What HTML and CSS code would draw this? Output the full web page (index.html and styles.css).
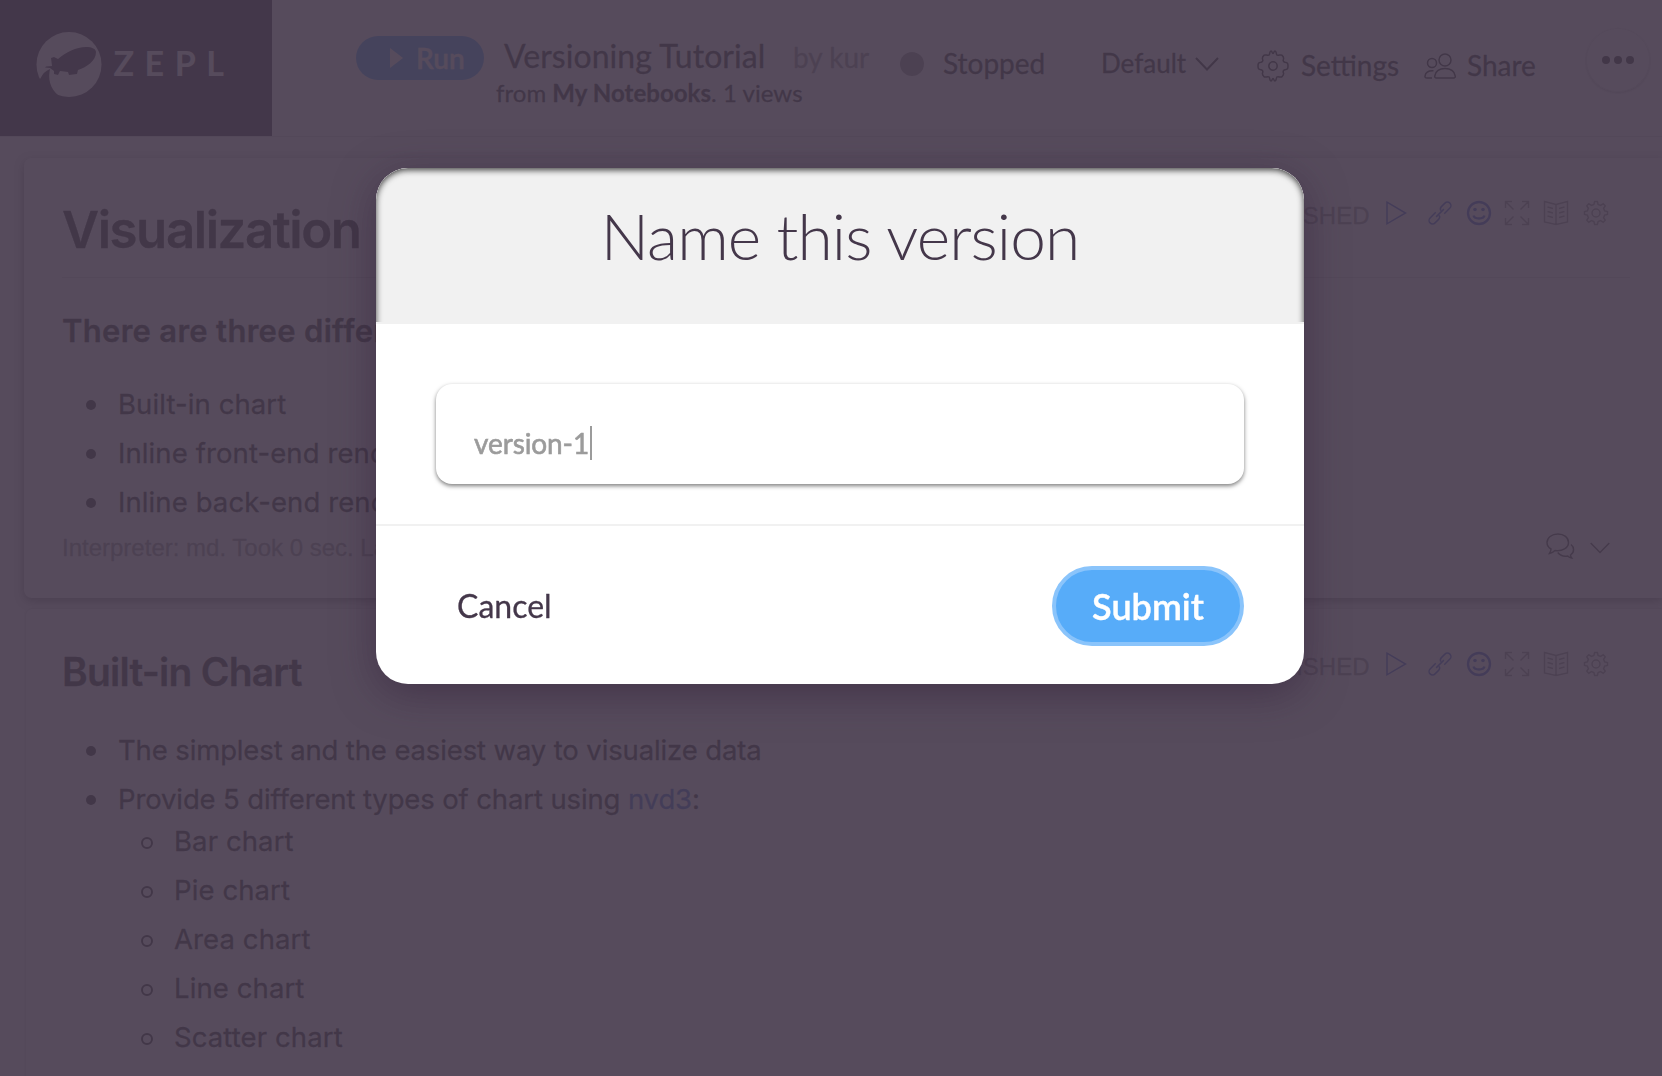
FILE: index.html
```html
<!DOCTYPE html>
<html lang="en">
<head>
<meta charset="utf-8">
<title>Versioning Tutorial</title>
<link rel="stylesheet" href="styles.css">
</head>
<body>
<svg class="sprite" width="0" height="0" aria-hidden="true">
  <symbol id="play" viewBox="0 0 24 26"><path d="M3 2.2 21.5 13 3 23.8Z"/></symbol>
  <symbol id="link" viewBox="0 0 26 26"><g transform="rotate(-45 13 13)"><path d="M10.5 9.5H2.5a3.5 3.5 0 0 0-3.5 3.500a3.500 3.500 0 0 0 3.500 3.500h5a3.500 3.500 0 0 0 3.300-2.400M15.500 16.500h8a3.500 3.500 0 0 0 3.500-3.500a3.500 3.500 0 0 0-3.500-3.500h-5a3.500 3.500 0 0 0-3.300 2.400M7.500 13h11"/></g></symbol>
  <symbol id="smile" viewBox="0 0 26 26"><circle cx="13" cy="13" r="11"/><path d="M7.500 15.500c1.200 4 9.800 4 11 0"/><circle class="dot" cx="9" cy="9.500" r="1.800"/><circle class="dot" cx="17" cy="9.500" r="1.800"/></symbol>
  <symbol id="expand" viewBox="0 0 26 26"><path d="M1.500 8V1.500H8M18 1.500h6.500V8M24.500 18v6.500H18M8 24.500H1.500V18M1.500 1.500l8 8M24.500 1.500l-8 8M24.500 24.500l-8-8M1.500 24.500l8-8"/></symbol>
  <symbol id="book" viewBox="0 0 26 26"><path d="M13 4.500 1.500 1.500v20.500L13 24.500l11.500-2.500V1.500ZM13 4.500v20M4.500 7l5.500 1.500M4.500 11.500l5.500 1.500M4.500 16l5.500 1.500M21.500 7 16 8.500M21.500 11.500 16 13M21.500 16 16 17.500"/></symbol>
  <symbol id="gear" viewBox="0 0 26 26"><path d="M10.900 4.400 11.600 1.500h2.800l.7 2.900 2.500 1 2.600-1.600 2 2-1.600 2.600 1 2.500 2.900.7v2.800l-2.900.7-1 2.500 1.600 2.600-2 2-2.600-1.600-2.500 1-.7 2.900h-2.800l-.7-2.900-2.500-1-2.600 1.600-2-2 1.600-2.600-1-2.500-2.900-.7v-2.800l2.900-.7 1-2.500-1.600-2.600 2-2 2.600 1.600Z"/><circle cx="13" cy="13" r="4"/></symbol>
</svg>

<div class="page">
  <header class="topbar">
    <div class="brand">
      <svg class="brand-mark" viewBox="0 0 66 66"><circle class="disc" cx="33" cy="32.500" r="32.500"/><path class="cut" d="M13.500 40C12 50 16 60 26 66L0 66V50L4 47Q8 39 14 37Z"/><path class="cut" d="M10 34.500 16 34 15 26l3-1 4 2c8-7 18-12 28-12 6 0 10 2 10 5 0 9-9 15-18 18l-1 4-8 1-1-3-8-1-2 4-4-1v-3l-4-3-5-.500Z"/></svg>
      <span class="brand-name">ZEPL</span>
    </div>
    <button class="run"><svg viewBox="0 0 13 20"><path d="M0 0 13 10 0 20Z"/></svg><span>Run</span></button>
    <div class="doc">
      <div class="doc-line"><span class="doc-title">Versioning Tutorial</span><span class="doc-by">by kur</span></div>
      <div class="doc-from">from <b>My Notebooks</b>. 1 views</div>
    </div>
    <div class="status"><i></i><span>Stopped</span></div>
    <div class="mode"><span>Default</span><svg viewBox="0 0 24 14"><path d="M1 1 12 12.500 23 1"/></svg></div>
    <div class="action settings"><svg viewBox="0 0 32 32"><path d="M12.200 5C13 3.500 12.500 1 14 1c1.500 0 .800 2.500 2 2.500S16.500 1 18 1c1.500 0 1 2.500 1.800 4 1.500 1 3.800-.800 5 .200 1.200 1 2.200 2.500 1.600 4-.6 1.300 0 2.600 1.600 3 2.500.500 3 1 3 3.800s-.500 3.300-3 3.800c-1.600.400-2.200 1.700-1.600 3 .6 1.500-.4 3-1.600 4-1.200 1-3.500-.800-5 .200-.8 1.500-.3 4-1.800 4s-.8-2.500-2-2.500-.5 2.500-2 2.500-1-2.500-1.800-4c-1.500-1-3.800.800-5-.200-1.200-1-2.200-2.500-1.600-4 .6-1.300 0-2.600-1.600-3-2.500-.500-3-1-3-3.800s.5-3.300 3-3.800c1.600-.4 2.200-1.700 1.600-3-.6-1.500.4-3 1.600-4 1.200-1 3.500.800 5-.200Z"/><circle cx="16" cy="16" r="4.200"/></svg><span>Settings</span></div>
    <div class="action share"><svg viewBox="0 0 32 26"><ellipse cx="21" cy="7" rx="6" ry="5.900"/><ellipse cx="8" cy="10" rx="4.500" ry="4.600"/><path d="M12.500 25h17c1.500 0 2-.800 1.700-2.200C30.300 18 26 15.500 21 15.500s-9.300 2.500-10.200 7.300c-.300 1.400.200 2.200 1.700 2.200ZM8 25H3c-1.500 0-2.300-.500-2-2 .600-3.500 3.500-5.500 8.500-5.200"/></svg><span>Share</span></div>
    <div class="more"><i></i><i></i><i></i></div>
  </header>

  <main class="notebook">
    <section class="card card-first">
      <div class="card-head ruled">
        <h1>Visualization</h1>
        <div class="tools"><span>FINISHED</span><svg class="blue t-play"><use href="#play"/></svg><svg class="blue t-link"><use href="#link"/></svg><svg class="blue bold"><use href="#smile"/></svg><svg><use href="#expand"/></svg><svg><use href="#book"/></svg><svg><use href="#gear"/></svg></div>
      </div>
      <h3>There are three different ways</h3>
      <ul>
        <li>Built-in chart</li>
        <li>Inline front-end rendering</li>
        <li>Inline back-end rendering</li>
      </ul>
      <div class="card-foot">
        <span>Interpreter: md. Took 0 sec. Last updated</span>
        <div class="foot-icons">
          <svg class="chat" viewBox="0 0 29 26"><path d="M12 1C5.500 1 1 4.800 1 9.500c0 3 1.500 5 4 6.500 0 2-.500 3-1.500 4.500 2.500-.500 4-1.500 5.500-3 7.500.800 13.500-2.500 13.500-8C22.500 4.500 18 1 12 1Z"/><path d="M25 11.500c3 2.500 4 7.500-.500 10.500 0 1.200.500 2 1.200 3-2-.300-3-1-4-2-4 .800-7.500-.500-10-3.500"/></svg>
          <svg class="chev" viewBox="0 0 20 12"><path d="M.700 1 10 10.500 19.300 1"/></svg>
        </div>
      </div>
    </section>

    <section class="card card-second">
      <div class="card-head">
        <h2>Built-in Chart</h2>
        <div class="tools"><span>FINISHED</span><svg class="blue t-play"><use href="#play"/></svg><svg class="blue t-link"><use href="#link"/></svg><svg class="blue bold"><use href="#smile"/></svg><svg><use href="#expand"/></svg><svg><use href="#book"/></svg><svg><use href="#gear"/></svg></div>
      </div>
      <ul>
        <li>The simplest and the easiest way to visualize data</li>
        <li>Provide 5 different types of chart using&nbsp;<a>nvd3</a>:</li>
      </ul>
      <ul class="sub">
        <li>Bar chart</li>
        <li>Pie chart</li>
        <li>Area chart</li>
        <li>Line chart</li>
        <li>Scatter chart</li>
      </ul>
    </section>
  </main>
</div>

<div class="backdrop">
  <div class="dialog">
    <div class="dialog-head">Name this version</div>
    <div class="dialog-body"><div class="field"><span>version-1</span><i class="caret"></i></div></div>
    <div class="dialog-foot"><button class="cancel">Cancel</button><button class="submit">Submit</button></div>
  </div>
</div>
</body>
</html>
```

FILE: styles.css
```css
* { box-sizing: border-box; }
html, body { height: 100%; }
body { margin: 0; overflow: hidden; font-family: Lato, "Liberation Sans", sans-serif; background: #f7f7f7; color: #333; }
button { border: 0; background: none; padding: 0; font: inherit; }
svg { display: block; flex: none; fill: none; stroke: currentColor; stroke-width: 1.5; overflow: visible; }
.sprite { position: absolute; }
.page { height: 1076px; overflow: hidden; -webkit-text-stroke: .3px; }

/* top bar */
.topbar { display: flex; align-items: flex-start; height: 137px; background: #fff; border-bottom: 1px solid #ddd; white-space: nowrap; }
.brand { display: flex; width: 272px; height: 136px; padding: 31.500px 0 0 35.500px; background: #44374a; color: #fff; flex: none; }
.brand-mark { width: 66px; height: 66px; stroke: none; }
.brand-mark .disc { fill: #fff; }
.brand-mark .cut { fill: #44374a; }
.brand-name { margin: 11.500px 0 0 12px; font-size: 34px; line-height: 40px; font-weight: 700; letter-spacing: 10.5px; -webkit-text-stroke: 0; }
.run { display: flex; align-items: center; width: 128px; height: 44px; margin: 36px 0 0 84px; padding-left: 34px; border-radius: 22px; background: #57acf7; color: #fff; font-size: 28px; font-weight: 600; flex: none; }
.run svg { width: 13px; height: 20px; margin-right: 13px; fill: #fff; stroke: none; }
.run span { margin-top: -1px; }
.doc { width: 404px; margin: 36px 0 0 12px; flex: none; }
.doc-line { display: flex; align-items: baseline; height: 40px; padding-left: 8px; line-height: 40px; }
.doc-title { width: 289px; font-size: 32px; letter-spacing: .05px; }
.doc-by { font-size: 28px; color: #999; }
.doc-from { font-size: 24px; line-height: 32px; margin-top: 1px; letter-spacing: .04px; }
.status { display: flex; align-items: center; width: 202px; height: 40px; margin-top: 44px; font-size: 28px; flex: none; }
.status i { width: 24px; height: 24px; margin-right: 19px; border-radius: 50%; background: #999; }
.status span, .mode span, .action span { margin-top: -2px; }
.mode { display: flex; align-items: center; width: 156px; height: 40px; margin-top: 44px; font-size: 26px; flex: none; }
.mode span { width: 93px; margin-left: -1px; margin-right: 1px; }
.mode svg { width: 24px; height: 14px; stroke-width: 2; }
.action { display: flex; align-items: center; height: 40px; margin-top: 46px; font-size: 28px; flex: none; }
.action svg { width: 32px; }
.settings { width: 166px; }
.settings svg { height: 32px; margin: -1px 12px 0 -1px; }
.share { width: 162px; }
.share svg { height: 26px; margin-right: 11px; }
.more { display: flex; justify-content: center; align-items: center; gap: 3.500px; width: 64px; height: 64px; margin-top: 28px; border: 1px solid #e8e8e8; border-radius: 50%; box-shadow: 0 1px 3px #bbb; flex: none; }
.more i { width: 8.500px; height: 8.500px; border-radius: 50%; background: #333; }

/* notebook paragraphs */
.notebook { padding-top: 21px; font-family: Inter, "Liberation Sans", sans-serif; }
.card { position: relative; background: #fff; }
.card-first { height: 440px; margin-left: 24px; padding: 42px 32px 0 38px; border-radius: 8px 0 0 8px; box-shadow: 0 3px 10px rgba(0,0,0,.45); }
.card-second { height: 480px; margin: 11px 0 0 26px; padding: 39px 32px 0 36px; border-radius: 6px 0 0 0; box-shadow: 0 0 2px rgba(0,0,0,.3); }
.card-head { display: flex; justify-content: space-between; }
.ruled { height: 78px; border-bottom: 1px solid #ddd; }
h1, h2, h3, ul { margin: 0; padding: 0; }
h1 { font-size: 51px; line-height: 60px; font-weight: 600; letter-spacing: -1.450px; }
h2 { font-size: 39px; line-height: 48px; font-weight: 600; letter-spacing: -.780px; }
h3 { margin-top: 33px; font-size: 31px; line-height: 40px; font-weight: 600; letter-spacing: .3px; }
ul { margin-top: 32px; font-size: 27.500px; line-height: 42px; list-style: none; letter-spacing: .1px; }
.card-second > ul { margin-top: 33px; letter-spacing: -.13px; }
.card-second > .sub { margin: 0 0 0 56px; letter-spacing: .1px; }
li { display: flex; align-items: center; white-space: pre; }
li + li { margin-top: 7px; }
li::before { content: ""; box-sizing: border-box; width: 10px; height: 10px; margin: 2px 22px 0 24px; border-radius: 50%; background: #333; }
.sub li::before { width: 12px; height: 12px; margin: 4px 21px 0 23px; border: 2px solid #333; background: none; }
a { color: #4173d4; }
.tools { display: flex; align-items: center; height: 26px; margin-right: 21px; color: #999; font: 24px "Liberation Sans", sans-serif; }
.card-second .tools { margin-top: 3px; }
.tools span { margin: 5px 14px 0 0; }
.tools svg { width: 26px; height: 26px; margin-left: 13px; }
.tools .t-play { width: 24px; margin-left: 0; }
.tools .t-link { margin-left: 19px; }
.tools .t-link + svg + svg { margin-left: 12.500px; }
.tools svg:last-child { margin-left: 14px; }
.tools .blue { color: #4a6bd8; }
.tools .bold { stroke-width: 2.400; }
.dot { fill: currentColor; stroke: none; }
.card-foot { display: flex; justify-content: space-between; margin-top: 10px; color: #999; font: 24px/30px "Liberation Sans", sans-serif; }
.foot-icons { display: flex; align-items: center; gap: 15px; margin-right: 20px; height: 26px; color: #555; }
.chat { width: 29px; height: 26px; }
.chev { width: 20px; height: 12px; margin-top: 3px; }

/* modal */
.backdrop { position: fixed; inset: 0; padding: 168px 0 0 376px; background: rgba(68,55,74,.9); color: #44374a; }
.dialog { width: 928px; height: 516px; border-radius: 32px; background: #fff; box-shadow: 0 10px 40px rgba(50,30,55,.5); overflow: hidden; }
.dialog-head { height: 166px; margin-bottom: -12px; padding-top: 28px; border-radius: 32px 32px 0 0; background: #f1f1f1; box-shadow: inset 0 2px 6px rgba(0,0,0,.75); font-size: 64px; line-height: 80px; font-weight: 300; letter-spacing: -.930px; text-align: center; }
.dialog-body { position: relative; height: 204px; padding: 60px; border-top: 2px solid #f1f1f1; border-bottom: 2px solid #f1f1f1; background: #fff; }
.dialog-body { padding-top: 60px; }
.field { display: flex; width: 808px; height: 100px; padding: 42px 0 0 38px; border-radius: 16px; box-shadow: 0 2px 4px rgba(0,0,0,.5); background: #fff; color: #9b9b9b; font-size: 28px; line-height: 35px; letter-spacing: -.1px; -webkit-text-stroke: .6px #9b9b9b; }
.caret { width: 2px; height: 34px; margin-left: 1px; background: #9b9b9b; }
.dialog-foot { display: flex; justify-content: space-between; align-items: flex-start; padding: 40px 60px 0 81px; }
.cancel { height: 78px; font-size: 32px; color: #44374a; -webkit-text-stroke: .3px; }
.submit { width: 192px; height: 80px; border: 4px solid #8ac4fb; border-radius: 40px; background: #57acf9; color: #fff; font-size: 36px; font-weight: 600; -webkit-text-stroke: .4px; }
```
